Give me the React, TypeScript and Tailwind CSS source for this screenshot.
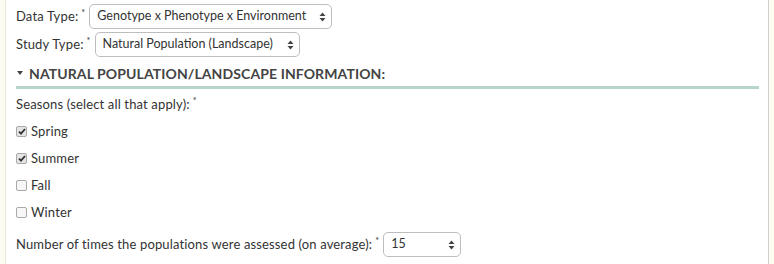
import React from "react";

function Arrows() {
  return (
    <svg width="7" height="10" viewBox="0 0 7 10" className="shrink-0">
      <path d="M3.5 0.5 L6.5 4 L0.5 4 Z" fill="#444" />
      <path d="M3.5 9.5 L6.5 6 L0.5 6 Z" fill="#444" />
    </svg>
  );
}

function Select({ value, width }: { value: string; width: string }) {
  return (
    <div
      className={`${width} h-[25px] flex items-center justify-between rounded-[5px] border border-[#bdbdbd] bg-white pl-[7px] pr-[5px] text-[12.5px] tracking-normal text-[#333]`}
    >
      <span className="whitespace-nowrap">{value}</span>
      <Arrows />
    </div>
  );
}

function Req() {
  return <span className="relative -top-[4px] text-[9px] ml-[3px] mr-[4px]">*</span>;
}

function Check({ label, checked }: { label: string; checked?: boolean }) {
  return (
    <div className="h-[27px] flex items-center gap-[4px]">
      <span
        className={`w-[11px] h-[11px] rounded-[2px] border border-[#a9a9a9] flex items-center justify-center ${
          checked ? "bg-[#e4e4e4]" : "bg-[#f7f7f7]"
        }`}
      >
        {checked && (
          <svg width="8" height="7" viewBox="0 0 8 7">
            <path d="M1 3.6 L3 5.6 L7 1" stroke="#333" strokeWidth="1.8" fill="none" />
          </svg>
        )}
      </span>
      <span>{label}</span>
    </div>
  );
}

export default function App() {
  return (
    <div className="w-[774px] h-[264px] bg-[#fcfcf1] overflow-hidden" style={{ fontFamily: "Lato, 'Liberation Sans', sans-serif" }}>
      <div className="ml-[5px] w-[764px] h-full bg-white border-l border-[#e8e8d6] border-r border-r-[#cfcfcf] pl-[10px] pr-[9px] text-[13px] tracking-[0.15px] text-[#333]">
        <div className="h-[32px] pt-[4px] flex items-start">
          <div className="h-[25px] flex items-center">
            <span>Data Type:</span>
            <Req />
          </div>
          <Select value="Genotype x Phenotype x Environment" width="w-[243px]" />
        </div>
        <div className="h-[28px] flex items-start">
          <div className="h-[25px] flex items-center">
            <span>Study Type:</span>
            <Req />
          </div>
          <Select value="Natural Population (Landscape)" width="w-[205px]" />
        </div>
        <div className="h-[29px] border-b-[3px] border-[#b6d6cc] flex items-center gap-[6px] text-[14px] font-bold text-[#444] tracking-[0.1px]">
          <svg width="6" height="4" viewBox="0 0 6 4" className="ml-[1px]">
            <path d="M0 0 L6 0 L3 4 Z" fill="#444" />
          </svg>
          <span>NATURAL POPULATION/LANDSCAPE INFORMATION:</span>
        </div>
        <div className="h-[29px] flex items-center pt-[2px]">
          <span>Seasons (select all that apply):</span>
          <Req />
        </div>
        <div>
          <Check label="Spring" checked />
          <Check label="Summer" checked />
          <Check label="Fall" />
          <Check label="Winter" />
        </div>
        <div className="pt-[6px] flex items-center">
          <span>Number of times the populations were assessed (on average):</span>
          <Req />
          <Select value="15" width="w-[78px]" />
        </div>
      </div>
    </div>
  );
}
